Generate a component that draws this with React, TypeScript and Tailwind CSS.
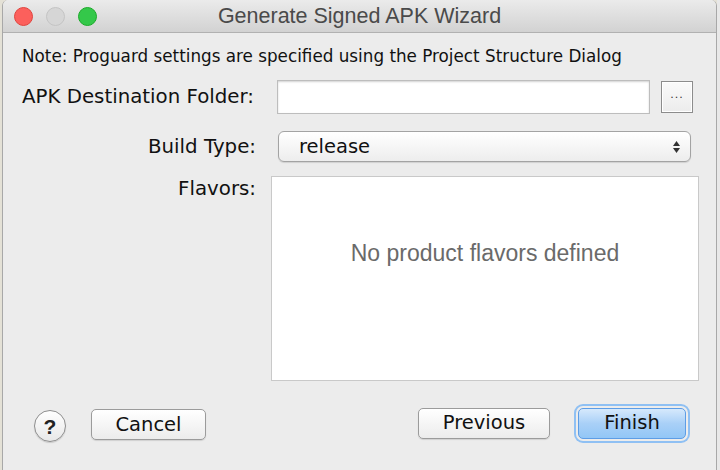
import React from "react";

const lucida = { fontFamily: '"DejaVu Sans", "Noto Sans", sans-serif' };
const helv = { fontFamily: '"Liberation Sans", Arial, sans-serif' };

function TrafficLights() {
  return (
    <div className="flex items-center gap-[13px] pl-[11px]">
      <span className="h-[19px] w-[19px] rounded-full border border-[#e0443e] bg-[#fc605c]" />
      <span className="h-[19px] w-[19px] rounded-full border border-[#c4c4c4] bg-[#d6d6d6]" />
      <span className="h-[19px] w-[19px] rounded-full border border-[#1aab29] bg-[#34c84a]" />
    </div>
  );
}

function Label({ children, className = "" }: { children: React.ReactNode; className?: string }) {
  return (
    <div className={`w-[234px] shrink-0 text-right text-[19.8px] leading-[24px] text-[#111] ${className}`} style={lucida}>
      {children}
    </div>
  );
}

function Button({ children, className = "" }: { children: React.ReactNode; className?: string }) {
  return (
    <button
      className={`flex h-[31px] items-center justify-center rounded-[5px] border border-[#9b9b9b] bg-gradient-to-b from-white to-[#ececec] text-[19.5px] text-[#111] shadow-[0_1px_1px_rgba(0,0,0,0.12)] ${className}`}
      style={lucida}
    >
      {children}
    </button>
  );
}

export default function App() {
  return (
    <div className="flex h-[470px] w-[720px] overflow-hidden bg-[#e4e1d6]">
      <div className="ml-[2px] flex h-full w-[715px] flex-col overflow-hidden rounded-t-[6px] border-x border-[#a8a8a8] bg-[#ececec]">
        {/* title bar */}
        <div className="relative flex h-[33px] shrink-0 items-center border-b border-[#b1b1b1] bg-gradient-to-b from-[#ebebeb] to-[#d2d2d2]">
          <TrafficLights />
          <div className="absolute inset-0 flex items-center justify-center text-[21.5px] text-[#4a4a4a]" style={helv}>
            Generate Signed APK Wizard
          </div>
        </div>

        {/* body */}
        <div className="flex flex-1 flex-col pl-[19px]">
          <div className="mt-[12px] text-[16.8px] leading-[22px] text-[#111]" style={lucida}>
            Note: Proguard settings are specified using the Project Structure Dialog
          </div>

          <div className="mt-[13px] flex items-center">
            <Label className="!text-left">APK Destination Folder:</Label>
            <div className="ml-[21px] h-[34px] w-[373px] border border-[#bdbdbd] bg-white shadow-[inset_0_1px_2px_rgba(0,0,0,0.18)]" />
            <div className="ml-[11px] flex h-[32px] w-[32px] items-center justify-center border border-[#8c8c8c] bg-gradient-to-b from-[#fafafa] to-[#ececec] shadow-[inset_0_0_0_1px_#fff]">
              <span className="-mt-[4px] text-[11px] tracking-[1px] text-[#333]" style={lucida}>...</span>
            </div>
          </div>

          <div className="mt-[17px] flex items-center">
            <Label>Build Type:</Label>
            <div className="ml-[22px] flex h-[31px] w-[413px] items-center justify-between rounded-[6px] border border-[#a3a3a3] bg-gradient-to-b from-white to-[#ededed] pl-[20px] pr-[9px] shadow-[0_1px_1px_rgba(0,0,0,0.12)]">
              <span className="text-[19.5px] text-[#111]" style={lucida}>release</span>
              <svg width="9" height="18" viewBox="0 0 9 18">
                <path d="M4.5 3 L8 8 L1 8 Z" fill="#333" />
                <path d="M4.5 15 L8 10 L1 10 Z" fill="#333" />
              </svg>
            </div>
          </div>

          <div className="mt-[14px] flex items-start">
            <Label className="pt-[1px]">Flavors:</Label>
            <div className="ml-[15px] flex h-[205px] w-[428px] items-start justify-center border border-[#c9c9c9] bg-white pt-[59px]">
              <span className="text-[23px] text-[#6a6a6a]" style={helv}>No product flavors defined</span>
            </div>
          </div>

          <div className="mt-[26px] flex items-center">
            <div className="ml-[12px] mt-[3px] flex h-[32px] w-[32px] items-center justify-center rounded-full border border-[#8e8e8e] bg-gradient-to-b from-white to-[#e8e8e8] shadow-[0_1px_1px_rgba(0,0,0,0.15)]">
              <span className="mt-[2px] text-[21px] font-bold text-[#222]" style={helv}>?</span>
            </div>
            <Button className="ml-[25px] w-[115px]">Cancel</Button>
            <Button className="ml-[212px] -mt-[3px] w-[132px]">Previous</Button>
            <div className="ml-[26px] -mt-[3px] rounded-[7px] p-[2px] shadow-[0_0_0_2px_#8fc0f3]">
              <button
                className="flex h-[31px] w-[108px] items-center justify-center rounded-[5px] border border-[#5d9de6] bg-gradient-to-b from-[#d6e9fc] via-[#a9d0f7] to-[#92c6f6] text-[19.5px] text-[#111]"
                style={lucida}
              >
                Finish
              </button>
            </div>
          </div>
        </div>
      </div>
      <div className="flex-1 bg-[#e8e8e8]" />
    </div>
  );
}
